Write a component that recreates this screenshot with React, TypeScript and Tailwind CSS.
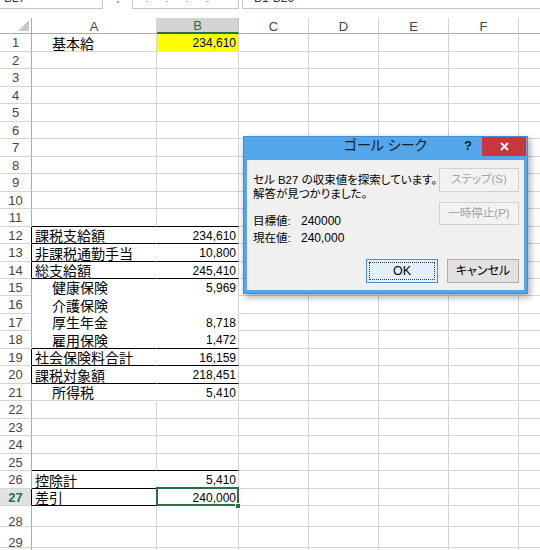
import React from "react";

type B = "black" | "hide" | "grid" | "yellow";
type Row = {
  n: number;
  h: string;
  a?: string;
  ind?: boolean;
  b?: string;
  aB?: B;
  bB?: B;
  aR?: "hide" | "grid";
  lb?: boolean;
  yellow?: boolean;
  sel?: boolean;
  tall?: boolean;
};

const rows: Row[] = [
  { n: 1, h: "h-[18px]", a: "基本給", ind: true, b: "234,610", yellow: true, bB: "yellow" },
  { n: 2, h: "h-[17px]" },
  { n: 3, h: "h-[18px]" },
  { n: 4, h: "h-[17px]" },
  { n: 5, h: "h-[18px]" },
  { n: 6, h: "h-[17px]" },
  { n: 7, h: "h-[18px]" },
  { n: 8, h: "h-[17px]" },
  { n: 9, h: "h-[18px]" },
  { n: 10, h: "h-[17px]" },
  { n: 11, h: "h-[18px]", aB: "black", bB: "black" },
  { n: 12, h: "h-[17px]", a: "課税支給額", b: "234,610", aB: "black", bB: "black", aR: "hide", lb: true },
  { n: 13, h: "h-[18px]", a: "非課税通勤手当", b: "10,800", aB: "black", bB: "black", aR: "hide", lb: true },
  { n: 14, h: "h-[17px]", a: "総支給額", b: "245,410", aB: "black", bB: "black", aR: "hide", lb: true },
  { n: 15, h: "h-[17px]", a: "健康保険", ind: true, b: "5,969", aB: "hide", bB: "hide", aR: "hide" },
  { n: 16, h: "h-[18px]", a: "介護保険", ind: true, aB: "hide", bB: "hide", aR: "hide" },
  { n: 17, h: "h-[17px]", a: "厚生年金", ind: true, b: "8,718", aB: "hide", bB: "hide", aR: "hide" },
  { n: 18, h: "h-[18px]", a: "雇用保険", ind: true, b: "1,472", aB: "black", bB: "black", aR: "hide" },
  { n: 19, h: "h-[17px]", a: "社会保険料合計", b: "16,159", aB: "black", bB: "black", aR: "hide", lb: true },
  { n: 20, h: "h-[18px]", a: "課税対象額", b: "218,451", aB: "black", bB: "black", aR: "hide", lb: true },
  { n: 21, h: "h-[17px]", a: "所得税", ind: true, b: "5,410", aR: "hide" },
  { n: 22, h: "h-[18px]" },
  { n: 23, h: "h-[17px]" },
  { n: 24, h: "h-[18px]" },
  { n: 25, h: "h-[17px]", aB: "black", bB: "black" },
  { n: 26, h: "h-[18px]", a: "控除計", b: "5,410", aB: "black", aR: "hide" },
  { n: 27, h: "h-[17px]", a: "差引", b: "240,000", aB: "black", aR: "hide", lb: true, sel: true },
  { n: 28, h: "h-[21px]", tall: true },
  { n: 29, h: "h-[21px]", tall: true },
  { n: 30, h: "h-[21px]", tall: true },
];

const bottomClass = (b?: B) =>
  b === "black"
    ? "border-b-black"
    : b === "hide"
    ? "border-b-white"
    : b === "yellow"
    ? "border-b-[#ffff00]"
    : "border-b-[#d4d4d4]";

const jp = "font-['Noto_Sans_CJK_JP',sans-serif]";
const num = "font-['Liberation_Sans',sans-serif]";
const ui = "font-['Liberation_Sans','Noto_Sans_CJK_JP',sans-serif] [font-feature-settings:'palt']";

function SheetRow({ r }: { r: Row }) {
  return (
    <div className={`flex ${r.h}`}>
      <div
        className={`flex w-[32px] shrink-0 justify-center border-r border-b border-b-[#d4d4d4] ${num} text-[13px] leading-none ${
          r.lb ? "border-r-black" : "border-r-[#ababab]"
        } ${r.sel ? "bg-[#e1e1e1] text-[#217346] font-bold" : "text-[#444444]"} ${
          r.tall ? "items-end" : "items-center"
        }`}
      >
        <span className={r.tall ? "relative top-[2px]" : ""}>{r.n}</span>
      </div>
      <div
        className={`flex w-[125px] shrink-0 items-center border-r border-b ${jp} text-[14px] leading-none text-black ${bottomClass(
          r.aB
        )} ${r.aR === "hide" ? "border-r-white" : "border-r-[#d4d4d4]"} ${r.ind ? "pl-[20px]" : "pl-[3px]"}`}
      >
        {r.a}
      </div>
      <div
        className={`relative flex w-[82px] shrink-0 items-center justify-end border-r border-r-[#d4d4d4] border-b pt-[1px] pr-[2px] ${num} text-[12px] leading-none text-black ${bottomClass(
          r.bB
        )} ${r.yellow ? "bg-[#ffff00]" : ""}`}
      >
        {r.b}
        {r.sel && (
          <>
            <div className="absolute left-[-1px] top-[-2px] right-[-1px] bottom-[-1px] border-2 border-[#217346]" />
            <div className="absolute left-[78px] top-[14px] z-10 h-[6px] w-[6px] border border-white bg-[#217346]" />
          </>
        )}
      </div>
      <div className="w-[70px] shrink-0 border-r border-b border-[#d4d4d4]" />
      <div className="w-[70px] shrink-0 border-r border-b border-[#d4d4d4]" />
      <div className="w-[70px] shrink-0 border-r border-b border-[#d4d4d4]" />
      <div className="w-[70px] shrink-0 border-r border-b border-[#d4d4d4]" />
      <div className="flex-1 border-b border-[#d4d4d4]" />
    </div>
  );
}

function HeaderCell({ label, w, sel }: { label: string; w: string; sel?: boolean }) {
  return (
    <div
      className={`flex ${w} shrink-0 items-center justify-center pt-[1px] ${num} text-[13px] leading-none ${
        sel
          ? "bg-[#d4d4d4] text-[#217346] border-b-2 border-b-[#217346] border-r border-r-[#c0c0c0]"
          : "text-[#444444] border-b border-b-[#ababab] border-r border-r-[#d4d4d4]"
      }`}
    >
      {label}
    </div>
  );
}

function Dialog() {
  return (
    <div className="absolute left-[243px] top-[136px] flex h-[158px] w-[285px] flex-col border border-[#3f8fd8] bg-[#54a6ea] shadow-[2px_3px_7px_rgba(0,0,0,0.35)]">
      <div className="relative flex h-[23px] shrink-0 justify-center">
        <span className={`${ui} text-[14px] leading-[16px] text-[#1b1b1b]`}>ゴール シーク</span>
        <span className={`absolute left-[220px] top-0 ${num} text-[13px] font-bold leading-[17px] text-[#1b1b1b]`}>?</span>
        <div className="absolute right-[1px] top-0 flex h-[19px] w-[44px] items-center justify-center bg-[#c7383c]">
          <svg width="9" height="9" viewBox="0 0 9 9">
            <path d="M1 1 L8 8 M8 1 L1 8" stroke="white" strokeWidth="1.8" />
          </svg>
        </div>
      </div>
      <div className={`mx-[3px] flex h-[130px] flex-col bg-[#f0f0f0] ${ui} text-black`}>
        <div className="flex">
          <div className="flex flex-col pl-[6px] pt-[13px] text-[11.5px]">
            <div className="h-[14px] leading-[14px]">セル B27 の収束値を探索しています。</div>
            <div className="h-[14px] leading-[14px]">解答が見つかりました。</div>
            <div className="mt-[12px] flex h-[17px] items-center leading-[17px]">
              <span className="w-[48px]">目標値:</span>
              <span className={`${num} text-[12px]`}>240000</span>
            </div>
            <div className="flex h-[17px] items-center leading-[17px]">
              <span className="w-[48px]">現在値:</span>
              <span className={`${num} text-[12px]`}>240,000</span>
            </div>
          </div>
          <div className="ml-auto mr-[5px] flex flex-col gap-[10px] pt-[8px]">
            <div className="flex h-[24px] w-[80px] items-center justify-center border border-[#d0d0d0] bg-[#f2f2f2] text-[11.5px] text-[#a3a3a3]">
              ステップ(S)
            </div>
            <div className="flex h-[23px] w-[80px] items-center justify-center border border-[#d0d0d0] bg-[#f2f2f2] text-[11.5px] text-[#a3a3a3]">
              一時停止(P)
            </div>
          </div>
        </div>
        <div className="mr-[5px] mt-[12px] flex justify-end gap-[9px]">
          <div className="flex h-[24px] w-[72px] items-center justify-center border border-[#3c94e0] bg-[#e3effa] p-[2px]">
            <div className={`flex h-full w-full items-center justify-center border border-dotted border-[#333] ${num} text-[12.5px]`}>
              OK
            </div>
          </div>
          <div className="flex h-[24px] w-[72px] items-center justify-center border border-[#adadad] bg-[#e1e1e1] text-[12px]">
            キャンセル
          </div>
        </div>
      </div>
    </div>
  );
}

export default function App() {
  return (
    <div className="relative h-[550px] w-[540px] overflow-hidden bg-white">
      {/* formula bar (cut off) */}
      <div className="flex h-[18px] items-start">
        <div className="h-[9px] w-[103px] shrink-0 overflow-hidden border-r border-b border-[#c6c6c6]">
          <div className={`-mt-[8px] pl-[4px] ${num} text-[12px] leading-[12px] text-[#333]`}>B27</div>
        </div>
        <div className="ml-[14px] mt-[1px] h-[2px] w-[2px] shrink-0 bg-[#a0a0a0]" />
        <div className="ml-[13px] flex h-[9px] w-[107px] shrink-0 items-start gap-[18px] border-l border-r border-b border-[#c6c6c6] pl-[13px] pt-[1px]">
          <div className="h-[1px] w-[2px] bg-[#b5b5b5]" />
          <div className="h-[1px] w-[2px] bg-[#b5b5b5]" />
          <div className="h-[1px] w-[2px] bg-[#b5b5b5]" />
          <div className="h-[1px] w-[3px] bg-[#b5b5b5]" />
        </div>
        <div className="ml-[3px] h-[9px] flex-1 overflow-hidden border-l border-b border-[#c6c6c6]">
          <div className={`-mt-[8px] pl-[4px] ${num} text-[12px] leading-[12px] text-[#333]`}>=B1-B26</div>
        </div>
      </div>
      {/* column headers */}
      <div className="flex h-[16px]">
        <div className="relative w-[32px] shrink-0 border-r border-r-[#ababab] border-b border-b-[#ababab]">
          <svg className="absolute right-[2px] bottom-[2px]" width="11" height="11" viewBox="0 0 11 11">
            <polygon points="11,0 11,11 0,11" fill="#c9c9c9" />
          </svg>
        </div>
        <HeaderCell label="A" w="w-[125px]" />
        <HeaderCell label="B" w="w-[82px]" sel />
        <HeaderCell label="C" w="w-[70px]" />
        <HeaderCell label="D" w="w-[70px]" />
        <HeaderCell label="E" w="w-[70px]" />
        <HeaderCell label="F" w="w-[70px]" />
        <div className="flex-1 border-b border-b-[#ababab]" />
      </div>
      {rows.map((r) => (
        <SheetRow key={r.n} r={r} />
      ))}
      <Dialog />
    </div>
  );
}
